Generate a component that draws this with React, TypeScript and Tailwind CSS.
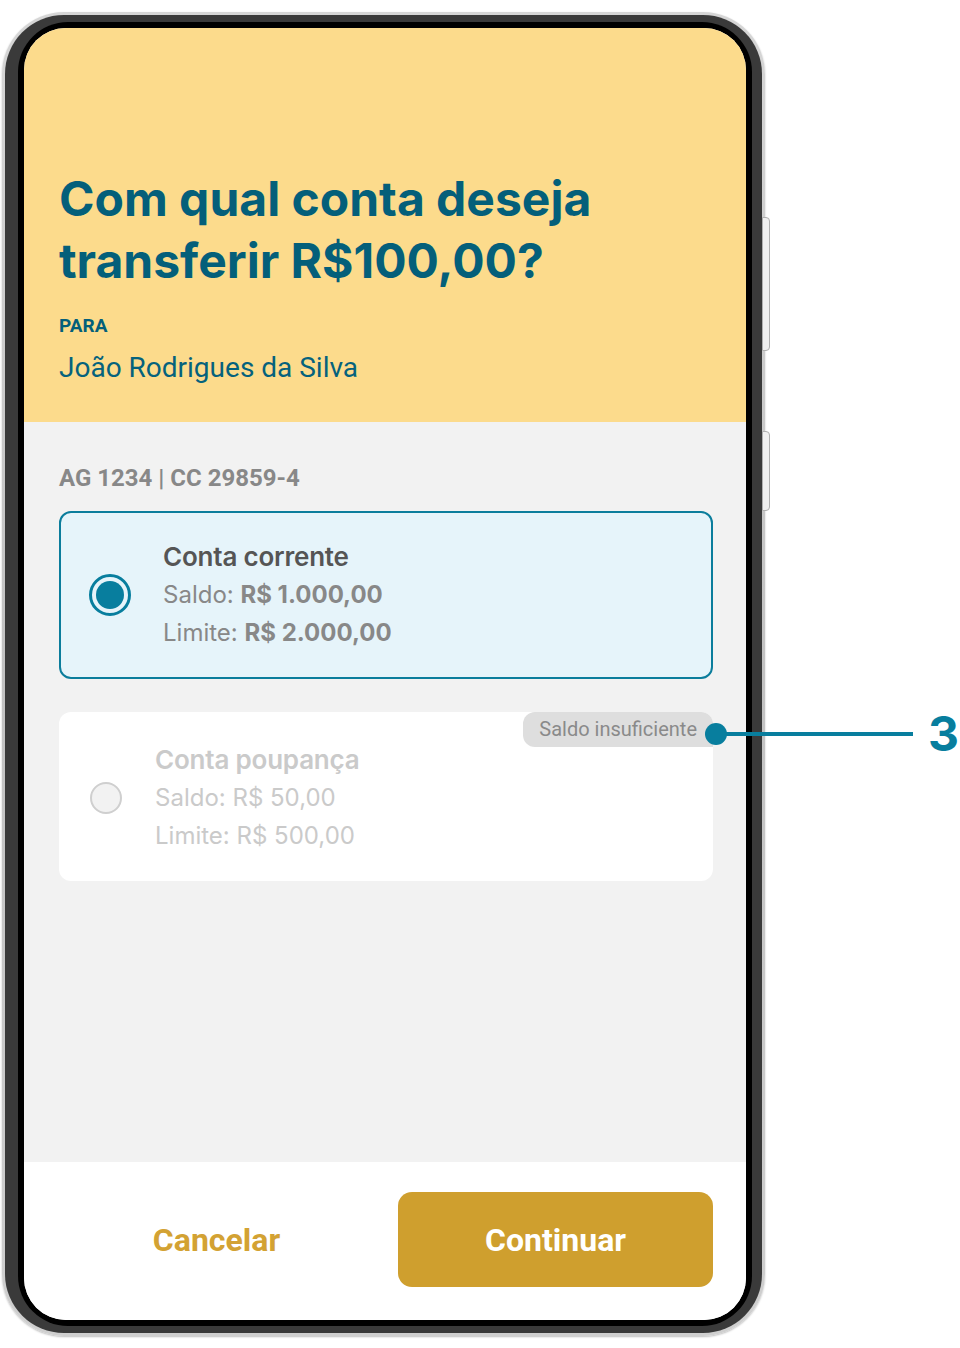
import React from "react";

const inter = "font-['Inter','Liberation_Sans',sans-serif]";
const roboto = "font-['Roboto','Liberation_Sans',sans-serif]";

interface AccountCardProps {
  title: string;
  saldo: string;
  limite: string;
  selected?: boolean;
  disabled?: boolean;
}

function AccountCard({ title, saldo, limite, selected, disabled }: AccountCardProps) {
  return (
    <div
      className={`relative flex items-center rounded-[12px] border-2 ${
        selected
          ? "border-[#0b7d9c] bg-[#e6f4fa] py-[25px] pl-[28px] gap-[32px]"
          : "border-transparent bg-white pt-[27px] pb-[24px] pl-[29px] gap-[33px]"
      }`}
    >
      {selected ? (
        <span className="flex h-[42px] w-[42px] shrink-0 items-center justify-center rounded-full border-[3px] border-[#087e9e]">
          <span className="h-[28px] w-[28px] rounded-full bg-[#087e9e]" />
        </span>
      ) : (
        <span className="h-[32px] w-[32px] shrink-0 rounded-full border-2 border-[#cfcfcf] bg-[#f2f2f2]" />
      )}
      <div className={`${inter} flex flex-col`}>
        <span
          className={`text-[26px] leading-[38px] font-semibold tracking-[-0.2px] ${
            disabled ? "text-[#cacaca]" : "text-[#555555]"
          }`}
        >
          {title}
        </span>
        <span className={`text-[24px] leading-[38px] ${disabled ? "text-[#cacaca]" : "text-[#888888]"}`}>
          Saldo: <span className={disabled ? "" : "font-bold"}>{saldo}</span>
        </span>
        <span className={`text-[24px] leading-[38px] ${disabled ? "text-[#cacaca]" : "text-[#888888]"}`}>
          Limite: <span className={disabled ? "" : "font-bold"}>{limite}</span>
        </span>
      </div>
      {disabled && (
        <span
          className={`${roboto} absolute -top-[2px] -right-[2px] rounded-tr-[12px] rounded-bl-[12px] rounded-tl-[12px] bg-[#dedede] pl-[16px] pr-[16px] text-[20px] leading-[35px] text-[#8a8a8a]`}
        >
          Saldo insuficiente
        </span>
      )}
    </div>
  );
}

export default function App() {
  return (
    <div className="relative h-[1348px] w-[960px] bg-white pl-[2px] pt-[12px]">
      <div className="relative w-[763px]">
        {/* side buttons */}
        <span className="absolute left-[760px] top-[205px] h-[134px] w-[8px] rounded-r-[4px] border border-[#b0b0b0] bg-[#f0f0f0]" />
        <span className="absolute left-[760px] top-[419px] h-[80px] w-[8px] rounded-r-[4px] border border-[#b0b0b0] bg-[#f0f0f0]" />

        <div className="rounded-[62px] bg-gradient-to-b from-[#d6d6d6] via-[#c2c2c2] to-[#cfcfcf] p-[3px] shadow-[0_1px_2px_rgba(0,0,0,0.25)]">
          <div className="rounded-[59px] bg-[#3a3a3a] pl-[13px] pr-[10px] py-[7px]">
            <div className="rounded-[50px] bg-black p-[6px]">
              <div className="flex h-[1292px] flex-col overflow-hidden rounded-[42px] bg-[#f2f2f2]">
                {/* header */}
                <div className="bg-[#fcdb8c] pl-[35px] pr-[33px] pt-[140px] pb-[36px]">
                  <h1 className={`${inter} text-[48px] leading-[62px] font-bold text-[#045f7a]`}>
                    Com qual conta deseja
                    <br />
                    transferir R$100,00?
                  </h1>
                  <p className={`${roboto} mt-[22px] text-[19px] leading-[24px] font-bold text-[#045f7a]`}>
                    PARA
                  </p>
                  <p className={`${roboto} mt-[12px] text-[28px] leading-[36px] text-[#05627d]`}>
                    João Rodrigues da Silva
                  </p>
                </div>

                {/* accounts */}
                <div className="flex-1 pl-[35px] pr-[33px] pt-[40px]">
                  <p className={`${roboto} text-[24px] leading-[32px] font-bold text-[#888888]`}>
                    AG 1234 | CC 29859-4
                  </p>
                  <div className="mt-[17px] flex flex-col gap-[33px]">
                    <AccountCard
                      selected
                      title="Conta corrente"
                      saldo="R$ 1.000,00"
                      limite="R$ 2.000,00"
                    />
                    <AccountCard
                      disabled
                      title="Conta poupança"
                      saldo="R$ 50,00"
                      limite="R$ 500,00"
                    />
                  </div>
                </div>

                {/* footer */}
                <div className="grid grid-cols-2 gap-6 bg-white pl-[35px] pr-[33px] pt-[30px] pb-[33px]">
                  <button
                    className={`${roboto} flex h-[95px] items-center justify-center text-[32px] font-bold text-[#d3a233]`}
                  >
                    Cancelar
                  </button>
                  <button
                    className={`${roboto} flex h-[95px] items-center justify-center rounded-[14px] bg-[#cf9f2e] text-[32px] font-bold text-white`}
                  >
                    Continuar
                  </button>
                </div>
              </div>
            </div>
          </div>
        </div>
      </div>

      {/* annotation */}
      <span className="absolute left-[705px] top-[723px] h-[22px] w-[22px] rounded-full bg-[#087e9e]" />
      <span className="absolute left-[716px] top-[732px] h-[4px] w-[197px] bg-[#087e9e]" />
      <span
        className={`${inter} absolute left-[928px] top-[706px] text-[48px] leading-[56px] font-bold text-[#087e9e]`}
      >
        3
      </span>
    </div>
  );
}
